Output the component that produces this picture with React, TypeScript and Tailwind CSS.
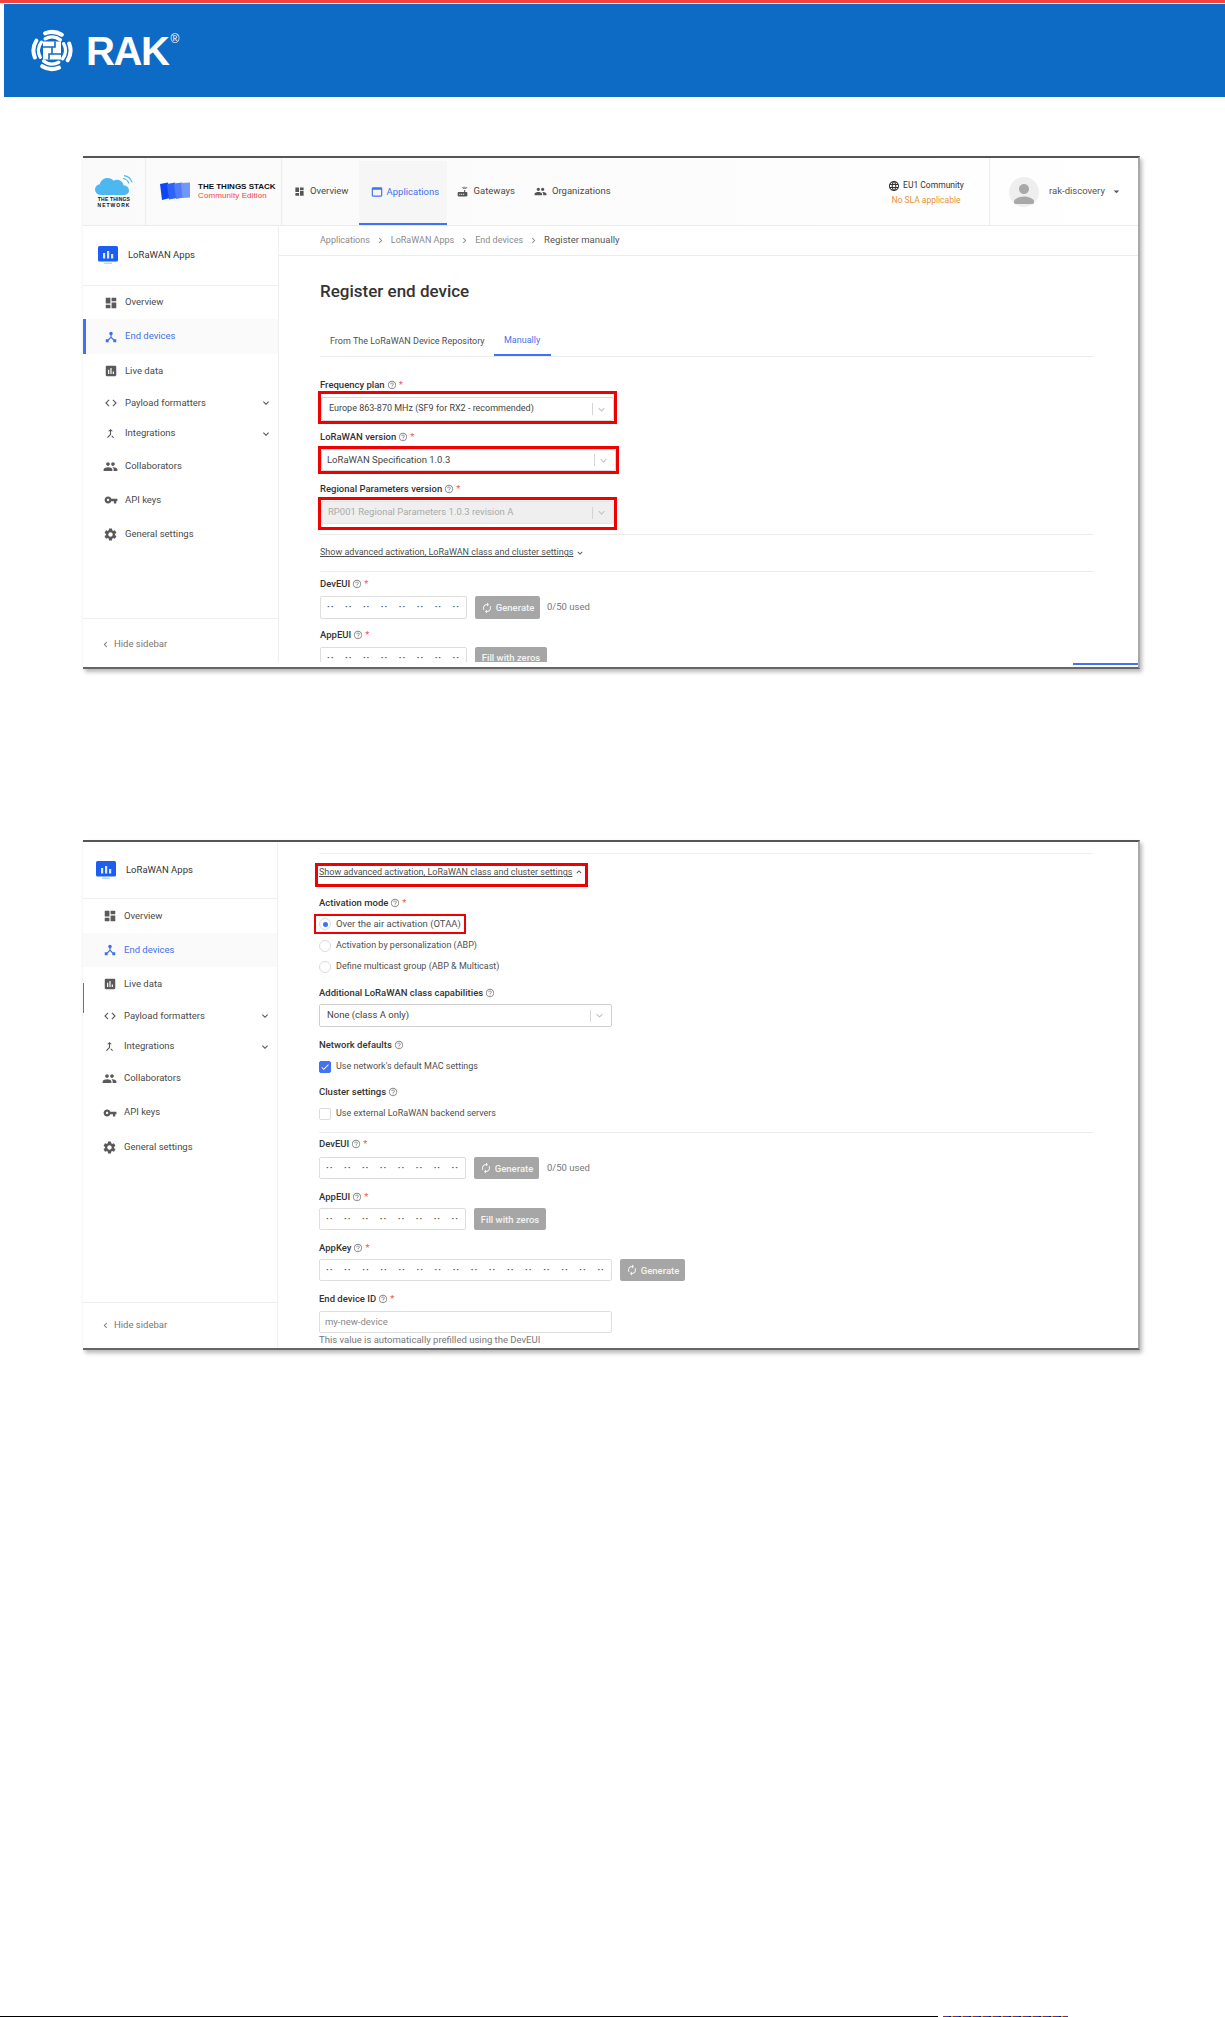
import type { ReactNode } from "react";
import {
  MdArrowDropDown,
  MdAssessment,
  MdAutorenew,
  MdCallMerge,
  MdCheck,
  MdCode,
  MdDashboard,
  MdDeviceHub,
  MdGroup,
  MdHelpOutline,
  MdKeyboardArrowDown,
  MdKeyboardArrowLeft,
  MdKeyboardArrowRight,
  MdKeyboardArrowUp,
  MdLanguage,
  MdPerson,
  MdRouter,
  MdSettings,
  MdVpnKey,
  MdWebAsset,
} from "react-icons/md";

const FONT = "font-['Roboto','Liberation_Sans',sans-serif]";

function arc(r: number, from: number, to: number) {
  const p = (a: number) => {
    const t = (a * Math.PI) / 180;
    return `${(21 + r * Math.cos(t)).toFixed(2)} ${(21 + r * Math.sin(t)).toFixed(2)}`;
  };
  return `M${p(from)}A${r} ${r} 0 0 1 ${p(to)}`;
}

function RakMark() {
  return (
    <svg width="42" height="43" viewBox="0 0 42 42" className="shrink-0">
      {[0, 90, 180, 270].map((rot) => (
        <g key={rot} transform={`rotate(${rot} 21 21)`} fill="none" stroke="#fff" strokeLinecap="round">
          <path d={arc(18.5, -112, -58)} strokeWidth="4" />
          <path d={arc(13.5, -120, -52)} strokeWidth="3.4" />
        </g>
      ))}
      <rect x="12" y="12" width="18" height="18" fill="#fff" />
      <path d="M12 17.5H24V12M30 24.5H18V30M21 17.5V24.5" stroke="#0d6bc6" strokeWidth="1.6" fill="none" />
    </svg>
  );
}

function TtnLogo() {
  return (
    <div className="flex w-[63px] shrink-0 flex-col items-center border-r border-[#ececec] pt-[17px]">
      <svg width="38" height="20" viewBox="0 0 38 20">
        <path
          d="M6 20C2.5 20 0 17.6 0 14.6 0 11.8 2.1 9.6 4.8 9.3 5.6 5.6 8.8 3 12.6 3c2.4 0 4.6 1 6 2.8 1-.6 2.2-1 3.4-1 3.3 0 6 2.4 6.5 5.5 3.100.1 5.500 2.300 5.500 5.100 0 2.700-2.400 4.600-5.200 4.600z"
          fill="#4db7ef"
        />
        <path d="M28 3.500c2.700.3 5 2.300 5.800 5M29 .6c3.800.4 7 3.100 8 6.800" stroke="#4db7ef" strokeWidth="1.200" fill="none" />
      </svg>
      <span className="mt-[1px] font-['Liberation_Sans',sans-serif] text-[5px] leading-[6px] font-bold tracking-[0.2px] text-[#111]">
        THE THINGS
      </span>
      <span className="font-['Liberation_Sans',sans-serif] text-[5px] leading-[6px] font-bold tracking-[1px] text-[#111]">
        NETWORK
      </span>
    </div>
  );
}

function StackLogo() {
  return (
    <div className="flex w-[136px] shrink-0 items-center gap-[7px] border-r border-[#ececec] pb-[1px] pl-[13px]">
      <svg width="32" height="18" viewBox="0 0 32 18" className="shrink-0">
        <path d="M1 2 9 0.500 11 16 3 18Z" fill="#0d47f5" />
        <path d="M8 2 16 0.500 18 16 10 17.500Z" fill="#2f63f7" />
        <path d="M15 1.500 23 0.500 24.500 15.500 17 17Z" fill="#4f7cf9" />
        <path d="M22 1 31 0.500 31 15.500 23.500 16Z" fill="#7296fb" />
      </svg>
      <div className="font-['Liberation_Sans',sans-serif] leading-none">
        <div className="text-[8px] leading-[9px] font-bold whitespace-nowrap text-[#111]">THE THINGS STACK</div>
        <div className="text-[8px] leading-[9px] font-normal tracking-[0.1px] whitespace-nowrap text-[#f4474b]">Community Edition</div>
      </div>
    </div>
  );
}

function TopBar() {
  return (
    <div className={`flex h-[68px] shrink-0 border-b border-[#ececec] bg-gradient-to-r from-[#fafafa] via-[#fcfcfc] to-white text-[9.5px] text-[#4a4a4a] ${FONT}`}>
      <TtnLogo />
      <StackLogo />
      <div className="flex items-center gap-[5px] pl-[12px]">
        <MdDashboard className="text-[#555]" size={11} />
        <span>Overview</span>
      </div>
      <div className="mt-[3px] ml-[10px] flex w-[88px] items-center gap-[3px] border-b-2 border-[#3f72f6] bg-[#f6f6f6] pl-[11px] text-[#4272ee]">
        <MdWebAsset size={14} />
        <span>Applications</span>
      </div>
      <div className="ml-[9px] flex items-center gap-[5px]">
        <MdRouter className="text-[#555]" size={13} />
        <span>Gateways</span>
      </div>
      <div className="ml-[19px] flex items-center gap-[5px]">
        <MdGroup className="text-[#555]" size={13} />
        <span>Organizations</span>
      </div>
      <div className="ml-auto flex w-[118px] flex-col items-center justify-center pt-[3px] pr-[8px] text-[8.5px] leading-[15px]">
        <div className="flex items-center gap-[3px] text-[#333]">
          <MdLanguage className="text-[#333]" size={12} />
          <span>EU1 Community</span>
        </div>
        <div className="text-[#e79335]">No SLA applicable</div>
      </div>
      <div className="flex w-[149px] items-center border-l border-[#ececec] pl-[19px]">
        <div className="flex h-[30px] w-[30px] items-end justify-center overflow-hidden rounded-full bg-[#eeeeee]">
          <MdPerson className="-mb-[3px] text-[#a8a8a8]" size={32} />
        </div>
        <span className="ml-[10px] text-[#555]">rak-discovery</span>
        <MdArrowDropDown className="ml-[5px] text-[#555]" size={13} />
      </div>
    </div>
  );
}

type NavRowProps = {
  icon: ReactNode;
  label: string;
  height: string;
  active?: boolean;
  bar?: boolean;
  caret?: boolean;
  pad: string;
};

function NavRow({ icon, label, height, active, bar, caret, pad }: NavRowProps) {
  return (
    <div
      className={`flex items-center pr-[6px] ${height} ${pad} ${active ? "bg-[#fafafa] text-[#4272ee]" : "text-[#4a4a4a]"} ${
        bar ? "border-l-[3px] border-[#3f72f6]" : ""
      }`}
    >
      <span className={`flex w-[15px] justify-center ${active ? "text-[#3f6fe8]" : "text-[#5a5a5a]"}`}>{icon}</span>
      <span className="ml-[7px]">{label}</span>
      {caret && <MdKeyboardArrowDown className="ml-auto text-[#555]" size={12} />}
    </div>
  );
}

function AppsLogo() {
  return (
    <svg width="20" height="19" viewBox="0 0 20 19" className="shrink-0">
      <rect x="0" y="0" width="20" height="15.500" rx="1.500" fill="#1c5ff0" />
      <rect x="5" y="7" width="2.200" height="5.500" fill="#dfe8ff" />
      <rect x="9" y="5" width="2.200" height="7.500" fill="#dfe8ff" />
      <rect x="13" y="8" width="2.200" height="4.500" fill="#dfe8ff" />
      <rect x="6" y="16.500" width="8" height="1.500" fill="#bcd8f8" />
    </svg>
  );
}

function Sidebar({ second }: { second?: boolean }) {
  const pad = second ? "pl-[19px]" : "pl-[20px]";
  return (
    <div className={`relative flex shrink-0 flex-col border-r border-[#efefef] text-[9.5px] ${second ? "w-[195px]" : "w-[196px]"}`}>
      <div className={`flex shrink-0 items-center gap-[10px] border-b border-[#efefef] pr-[6px] ${second ? "h-[57px] pl-[13px]" : "h-[60px] pl-[15px]"}`}>
        <AppsLogo />
        <span className="text-[#333]">LoRaWAN Apps</span>
      </div>
      <NavRow pad={pad} height={second ? "h-[34px]" : "h-[33px]"} icon={<MdDashboard size={14} />} label="Overview" />
      {second ? (
        <NavRow pad={pad} height="h-[34px]" active icon={<MdDeviceHub size={14} />} label="End devices" />
      ) : (
        <NavRow pad="pl-[17px]" height="h-[35px]" active bar icon={<MdDeviceHub size={14} />} label="End devices" />
      )}
      <NavRow pad={pad} height="h-[34px]" icon={<MdAssessment size={14} />} label="Live data" />
      <NavRow pad={pad} height="h-[30px]" caret icon={<MdCode size={14} />} label="Payload formatters" />
      <NavRow pad={pad} height="h-[31px]" caret icon={<MdCallMerge size={13} />} label="Integrations" />
      <NavRow pad={pad} height={second ? "h-[33px]" : "h-[34px]"} icon={<MdGroup size={15} />} label="Collaborators" />
      <NavRow pad={pad} height={second ? "h-[35px]" : "h-[34px]"} icon={<MdVpnKey size={14} />} label="API keys" />
      <NavRow pad={pad} height="h-[34px]" icon={<MdSettings size={15} />} label="General settings" />
      <div className={`mt-auto flex items-center border-t border-[#efefef] pl-[17px] text-[#777] ${second ? "h-[46px]" : "h-[44px] pt-[8px]"}`}>
        <MdKeyboardArrowLeft size={11} />
        <span className="ml-[3px]">Hide sidebar</span>
      </div>
      {second && <div className="absolute top-[141px] left-0 h-[30px] w-[1px] bg-[#3f72f6]" />}
    </div>
  );
}

function Label({ text, required = true, className }: { text: string; required?: boolean; className: string }) {
  return (
    <div className={`flex h-[10px] items-center pb-[2px] text-[9.5px] leading-[10px] font-medium text-[#333] ${className}`}>
      <span>{text}</span>
      <MdHelpOutline className="ml-[2px] text-[#8a8a8a]" size={10} />
      {required && <span className="ml-[2px] font-normal text-[#f0555a]">*</span>}
    </div>
  );
}

function Select({ value, disabled, size }: { value: string; disabled?: boolean; size: string }) {
  return (
    <div
      className={`flex items-center rounded-[2px] border pr-[5px] ${size} ${
        disabled ? "border-[#e6e6e6] bg-[#efefef] text-[#aaa]" : "border-[#d9d9d9] bg-white text-[#444]"
      }`}
    >
      <span className="whitespace-nowrap">{value}</span>
      <span className="ml-auto h-[12px] w-[1px] bg-[#d4d4d4]" />
      <MdKeyboardArrowDown className="ml-[2px] text-[#c4c4c4]" size={13} />
    </div>
  );
}

function ByteInput({ groups, size }: { groups: number; size: string }) {
  return (
    <div className={`flex shrink-0 items-center justify-between rounded-[2px] border border-[#dedede] bg-white px-[6px] text-[9px] leading-[9px] font-bold text-[#555] ${size}`}>
      {Array.from({ length: groups }).map((_, i) => (
        <span key={i} className="tracking-[1px]">··</span>
      ))}
    </div>
  );
}

function GrayButton({ text, icon, size }: { text: string; icon?: boolean; size: string }) {
  return (
    <div className={`ml-[8px] flex shrink-0 items-center justify-center gap-[3px] self-start rounded-[2px] bg-[#a6a6a6] text-[9.5px] leading-[9px] font-medium text-[#f4f4f4] ${size}`}>
      {icon && <MdAutorenew size={12} />}
      <span>{text}</span>
    </div>
  );
}

function Radio({ text, checked, className }: { text: string; checked?: boolean; className: string }) {
  return (
    <div className={`flex h-[14px] items-center text-[#4f4f4f] ${className}`}>
      <span className="flex h-[12px] w-[12px] items-center justify-center rounded-full border border-[#dcdcdc] bg-white">
        {checked && <span className="h-[5px] w-[5px] rounded-full bg-[#3f72f6]" />}
      </span>
      <span className="ml-[5px]">{text}</span>
    </div>
  );
}

function Check({ text, checked, className }: { text: string; checked?: boolean; className: string }) {
  return (
    <div className={`flex h-[14px] items-center text-[9px] text-[#4f4f4f] ${className}`}>
      <span className={`flex h-[12px] w-[12px] items-center justify-center rounded-[2px] border ${checked ? "border-[#3f72f6] bg-[#3f72f6]" : "border-[#dcdcdc] bg-white"}`}>
        {checked && <MdCheck className="text-white" size={10} />}
      </span>
      <span className="ml-[5px]">{text}</span>
    </div>
  );
}

function FirstForm() {
  return (
    <div className="flex-1 overflow-hidden">
      <div className="flex h-[30px] items-center gap-[4px] border-b border-[#ececec] pl-[41px] text-[9px] text-[#8a8a8a]">
        <span>Applications</span>
        <MdKeyboardArrowRight size={11} className="mx-[1px]" />
        <span>LoRaWAN Apps</span>
        <MdKeyboardArrowRight size={11} className="mx-[1px]" />
        <span>End devices</span>
        <MdKeyboardArrowRight size={11} className="mx-[1px]" />
        <span className="text-[9.5px] text-[#555]">Register manually</span>
      </div>
      <div className="pr-[44px] pl-[41px]">
        <h1 className="mt-[21px] text-[17px] leading-[28px] font-medium text-[#333]">Register end device</h1>
        <div className="mt-[23px] flex h-[29px] border-b border-[#ececec] text-[9px]">
          <span className="flex items-center pl-[10px] text-[#4f4f4f]">From The LoRaWAN Device Repository</span>
          <span className="ml-[9px] flex w-[57px] items-center justify-center border-b-2 border-[#3f72f6] text-[#4272ee]">Manually</span>
        </div>

        <Label text="Frequency plan" className="mt-[24px]" />
        <div className="-ml-[2px] h-[33px] w-[299px] border-[3px] border-[#f00000] pt-[3px]">
          <Select value="Europe 863-870 MHz (SF9 for RX2 - recommended)" size="h-[24px] pl-[7px] text-[9px]" />
        </div>

        <Label text="LoRaWAN version" className="mt-[9px]" />
        <div className="mt-[3px] -ml-[2px] h-[28px] w-[301px] border-[3px] border-[#f00000]">
          <Select value="LoRaWAN Specification 1.0.3" size="h-[22px] pl-[5px] text-[9.5px]" />
        </div>

        <Label text="Regional Parameters version" className="mt-[11px]" />
        <div className="mt-[2px] -ml-[2px] h-[33px] w-[299px] border-[3px] border-[#f00000] pt-[1px]">
          <Select value="RP001 Regional Parameters 1.0.3 revision A" disabled size="h-[23px] pl-[6px] text-[9.5px]" />
        </div>

        <div className="mt-[4px] border-t border-[#ececec]" />
        <div className="mt-[10px] mb-[1px] flex h-[16px] items-center text-[9px] text-[#4f4f4f]">
          <span className="whitespace-nowrap underline">Show advanced activation, LoRaWAN class and cluster settings</span>
          <MdKeyboardArrowDown size={10} className="ml-[2px]" />
        </div>
        <div className="mt-[10px] border-t border-[#ececec]" />

        <Label text="DevEUI" className="mt-[8px]" />
        <div className="mt-[6px] flex items-center">
          <ByteInput groups={8} size="h-[23px] w-[147px]" />
          <GrayButton text="Generate" icon size="h-[23px] w-[65px]" />
          <span className="ml-[7px] text-[9.5px] text-[#777]">0/50 used</span>
        </div>

        <Label text="AppEUI" className="mt-[12px]" />
        <div className="mt-[6px] flex items-start">
          <ByteInput groups={8} size="h-[23px] w-[147px]" />
          <GrayButton text="Fill with zeros" size="h-[21px] w-[72px]" />
        </div>
      </div>
    </div>
  );
}

function SecondForm() {
  return (
    <div className="flex-1 overflow-hidden pr-[45px] pl-[41px]">
      <div className="mt-[11px] border-t border-[#f0f0f0]" />
      <div className="mt-[9px] -ml-[4px] flex h-[24px] w-[273px] border-[3px] border-[#f00000] pl-[1px] text-[9px] leading-[12px] text-[#4f4f4f]">
        <span className="whitespace-nowrap underline">Show advanced activation, LoRaWAN class and cluster settings</span>
        <MdKeyboardArrowUp size={10} className="mt-[1px] ml-[2px]" />
      </div>
      <Label text="Activation mode" className="mt-[12px]" />
      <div className="mt-[5px] -ml-[5px] flex h-[20px] w-[152px] items-center border-[2px] border-[#f00000] pl-[3px]">
        <Radio text="Over the air activation (OTAA)" checked className="text-[9.5px]" />
      </div>
      <Radio text="Activation by personalization (ABP)" className="mt-[5px] text-[9px]" />
      <Radio text="Define multicast group (ABP & Multicast)" className="mt-[7px] text-[9px]" />
      <Label text="Additional LoRaWAN class capabilities" required={false} className="mt-[15px]" />
      <Select value="None (class A only)" size="mt-[5px] h-[23px] w-[293px] pl-[7px] text-[9.5px] !border-[#cfcfcf]" />
      <Label text="Network defaults" required={false} className="mt-[14px]" />
      <Check text="Use network's default MAC settings" checked className="mt-[9px]" />
      <Label text="Cluster settings" required={false} className="mt-[14px]" />
      <Check text="Use external LoRaWAN backend servers" className="mt-[9px]" />
      <div className="mt-[11px] border-t border-[#ececec]" />

      <Label text="DevEUI" className="mt-[7px]" />
      <div className="mt-[7px] flex items-center">
        <ByteInput groups={8} size="h-[22px] w-[147px]" />
        <GrayButton text="Generate" icon size="h-[22px] w-[65px]" />
        <span className="ml-[8px] text-[9.5px] text-[#777]">0/50 used</span>
      </div>
      <Label text="AppEUI" className="mt-[14px]" />
      <div className="mt-[5px] flex items-center">
        <ByteInput groups={8} size="h-[22px] w-[147px]" />
        <GrayButton text="Fill with zeros" size="h-[22px] w-[72px]" />
      </div>
      <Label text="AppKey" className="mt-[14px]" />
      <div className="mt-[5px] flex items-center">
        <ByteInput groups={16} size="h-[22px] w-[293px]" />
        <GrayButton text="Generate" icon size="h-[22px] w-[65px]" />
      </div>
      <Label text="End device ID" className="mt-[14px]" />
      <div className="mt-[6px] flex h-[22px] w-[293px] items-center rounded-[2px] border border-[#dedede] pl-[5px] text-[9.5px] text-[#888]">my-new-device</div>
      <div className="mt-[2px] h-[10px] text-[9.5px] leading-[10px] text-[#777]">This value is automatically prefilled using the DevEUI</div>
    </div>
  );
}

export default function App() {
  return (
    <div className={`h-[2017px] w-[1225px] overflow-hidden bg-white ${FONT}`}>
      <div className="h-[3px] bg-[#f4433c]" />
      <div className="mt-[1px] ml-[4px] flex h-[93px] items-start bg-[#0d6bc6] pt-[25px] pl-[27px]">
        <RakMark />
        <span className="mt-[-1px] ml-[13px] font-['Liberation_Sans',sans-serif] text-[40px] leading-[46px] font-bold tracking-[-1.4px] text-white">RAK</span>
        <span className="mt-[3px] ml-[2px] font-['Liberation_Sans',sans-serif] text-[12px] leading-[14px] text-white">®</span>
      </div>

      <div className="mt-[59px] ml-[83px] flex h-[513px] w-[1057px] flex-col border-t-2 border-r-2 border-b-2 border-t-[#555] border-r-[#a9a9a9] border-b-[#666] shadow-[2px_3px_4px_rgba(0,0,0,0.28)]">
        <TopBar />
        <div className="flex min-h-0 flex-1">
          <Sidebar />
          <FirstForm />
        </div>
        <div className="flex h-[5px] shrink-0 justify-end pt-[1px]">
          <div className="h-[2px] w-[65px] bg-[#3f72f6]" />
        </div>
      </div>

      <div className="mt-[171px] ml-[83px] flex h-[510px] w-[1057px] border-t-2 border-r-2 border-b-2 border-t-[#555] border-r-[#a9a9a9] border-b-[#666] shadow-[2px_3px_4px_rgba(0,0,0,0.28)]">
        <Sidebar second />
        <SecondForm />
      </div>

      <div className="mt-[666px] flex h-[1px]">
        <div className="w-[938px] bg-black" />
        <div className="ml-[5px] w-[125px] bg-[repeating-linear-gradient(90deg,#c2161c_0_3px,#1a3fd0_3px_6px,#181818_6px_8px,#e08a18_8px_10px)]" />
      </div>
    </div>
  );
}
